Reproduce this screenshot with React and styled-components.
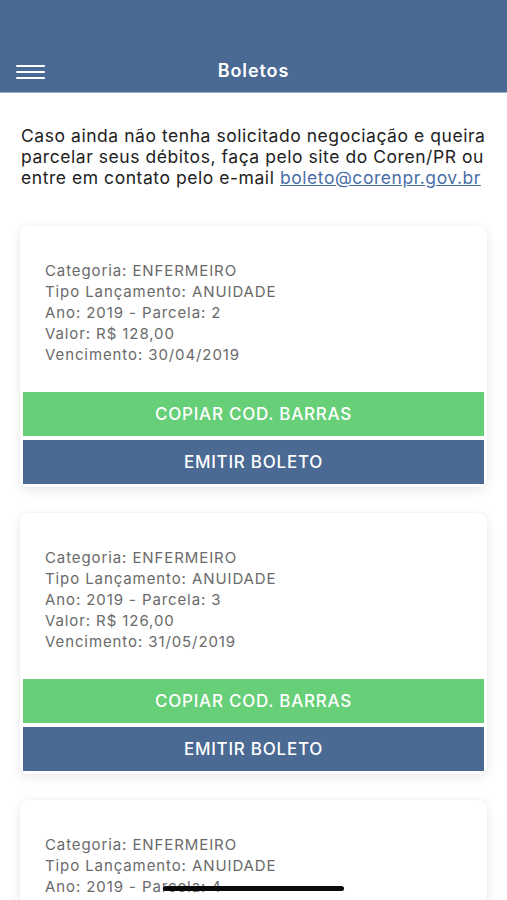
import React from "react";
import styled, { createGlobalStyle } from "styled-components";

const Global = createGlobalStyle`
  html, body { margin: 0; padding: 0; background: #ffffff; }
  body { font-family: Inter, "Liberation Sans", Arial, sans-serif; -webkit-font-smoothing: antialiased; }
  * { box-sizing: border-box; }
`;

const Screen = styled.div`
  width: 507px;
  height: 900px;
  overflow: hidden;
  position: relative;
  background: #ffffff;
`;

const Header = styled.header`
  height: 93px;
  background: #4a6993;
  border-bottom: 1px solid #9fb1c8;
  display: grid;
  grid-template-columns: 60px 1fr 60px;
  align-items: end;
  padding-bottom: 11px;
`;

const MenuButton = styled.div`
  display: flex;
  flex-direction: column;
  gap: 4px;
  padding-left: 16px;
  padding-bottom: 2px;
  span {
    display: block;
    width: 29px;
    height: 2px;
    background: #ffffff;
    border-radius: 1px;
  }
`;

const Title = styled.h1`
  margin: 0;
  text-align: center;
  color: #ffffff;
  font-size: 18px;
  font-weight: 600;
  letter-spacing: 0.9px;
`;

const Intro = styled.p`
  margin: 32px 0 0;
  padding: 0 21px;
  font-size: 17.5px;
  line-height: 21px;
  color: #222222;
  letter-spacing: 0.55px;
  white-space: nowrap;
  a {
    color: #4a6fa8;
    text-decoration: underline;
  }
`;

const List = styled.div`
  display: flex;
  flex-direction: column;
  gap: 26px;
  padding: 38px 20px 0;
`;

const Card = styled.div`
  background: #ffffff;
  border-radius: 8px;
  box-shadow: 0 3px 12px rgba(0, 0, 0, 0.09), 0 0 3px rgba(0, 0, 0, 0.04);
  padding: 34px 3px 3px;
  display: flex;
  flex-direction: column;
`;

const Info = styled.div`
  padding: 0 22px;
  margin-bottom: 27px;
`;

const Line = styled.div`
  font-size: 15px;
  line-height: 21px;
  color: #6a6a6a;
  letter-spacing: 0.9px;
`;

const Actions = styled.div`
  display: flex;
  flex-direction: column;
  gap: 4px;
`;

const Button = styled.button`
  height: 44px;
  border: none;
  margin: 0;
  background: ${(p) => (p.$variant === "green" ? "#66cf78" : "#4a6993")};
  color: #ffffff;
  font-family: Inter, "Liberation Sans", Arial, sans-serif;
  font-size: 17px;
  font-weight: 500;
  letter-spacing: 0.75px;
  text-transform: uppercase;
  display: flex;
  align-items: center;
  justify-content: center;
`;

const HomeIndicator = styled.div`
  position: absolute;
  left: 163px;
  top: 886px;
  width: 181px;
  height: 5px;
  border-radius: 3px;
  background: #0a0a0a;
`;

const boletos = [
  { parcela: 2, valor: "128,00", venc: "30/04/2019" },
  { parcela: 3, valor: "126,00", venc: "31/05/2019" },
  { parcela: 4, valor: "124,00", venc: "30/06/2019" },
];

export default function App() {
  return (
    <>
      <Global />
      <Screen>
        <Header>
          <MenuButton>
            <span />
            <span />
            <span />
          </MenuButton>
          <Title>Boletos</Title>
          <div />
        </Header>
        <Intro>
          Caso ainda não tenha solicitado negociação e queira
          <br />
          parcelar seus débitos, faça pelo site do Coren/PR ou
          <br />
          entre em contato pelo e-mail <a>boleto@corenpr.gov.br</a>
        </Intro>
        <List>
          {boletos.map((b) => (
            <Card key={b.parcela}>
              <Info>
                <Line>Categoria: ENFERMEIRO</Line>
                <Line>Tipo Lançamento: ANUIDADE</Line>
                <Line>Ano: 2019 - Parcela: {b.parcela}</Line>
                <Line>Valor: R$ {b.valor}</Line>
                <Line>Vencimento: {b.venc}</Line>
              </Info>
              <Actions>
                <Button $variant="green">Copiar Cod. Barras</Button>
                <Button $variant="blue">Emitir Boleto</Button>
              </Actions>
            </Card>
          ))}
        </List>
        <HomeIndicator />
      </Screen>
    </>
  );
}
